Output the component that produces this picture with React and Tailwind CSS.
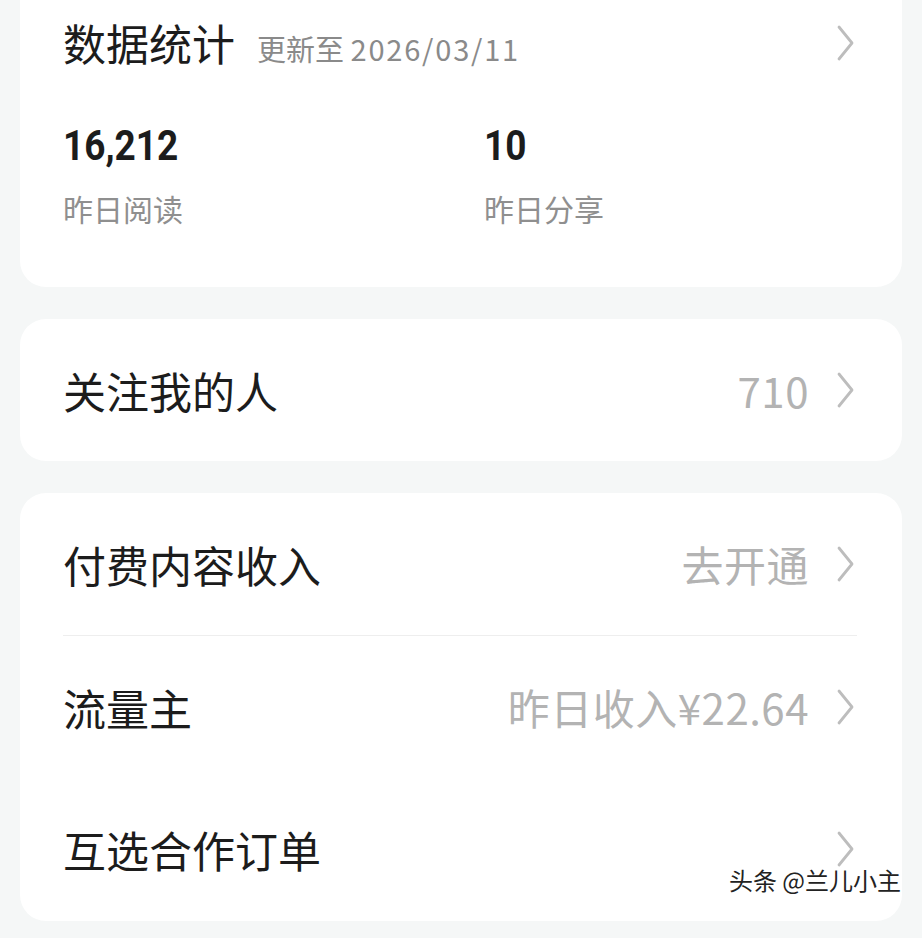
import React from 'react';

const Chevron = () => (
  <svg width="22" height="36" viewBox="0 0 22 36" className="shrink-0">
    <polyline points="4,2 17,18 4,34" fill="none" stroke="#bdbdbd" strokeWidth="2.8" strokeLinecap="round" strokeLinejoin="round" />
  </svg>
);

const Row = ({ label, value }) => (
  <div className="h-[142px] flex items-center justify-between">
    <span className="text-[43px] text-[#1c1c1c] leading-none">{label}</span>
    <div className="flex items-center gap-[26px]">
      {value && <span className="text-[42px] text-[#b3b3b3] leading-none tracking-[0.5px]">{value}</span>}
      <Chevron />
    </div>
  </div>
);

const Stat = ({ num, label, w }) => (
  <div className={w}>
    <div
      className="text-[43px] font-bold text-[#1c1c1c] leading-none inline-block origin-left scale-x-[0.86]"
      style={{ fontFamily: 'Roboto, sans-serif' }}
    >
      {num}
    </div>
    <div className="text-[30px] text-[#8f8f8f] leading-none mt-[26px]">{label}</div>
  </div>
);

const App = () => {
  return (
    <div
      className="w-[922px] h-[938px] bg-[#f5f7f7] px-[20px] flex flex-col gap-[32px] overflow-hidden relative"
      style={{ fontFamily: '"Noto Sans CJK SC", Roboto, sans-serif' }}
    >
      {/* Data card */}
      <div className="bg-white rounded-b-[26px] h-[287px] shrink-0 pl-[43px] pr-[45px]">
        <div className="flex items-center justify-between pt-[21px]">
          <div className="flex items-baseline gap-[22px]">
            <span className="text-[43px] text-[#1c1c1c] leading-none">数据统计</span>
            <span className="text-[29px] text-[#8a8a8a] leading-none">
              更新至 <span className="tracking-[1.8px]">2026/03/11</span>
            </span>
          </div>
          <Chevron />
        </div>
        <div className="flex mt-[60px]">
          <Stat num="16,212" label="昨日阅读" w="w-[421px]" />
          <Stat num="10" label="昨日分享" />
        </div>
      </div>

      {/* Followers */}
      <div className="bg-white rounded-[26px] shrink-0 pl-[43px] pr-[45px]">
        <Row label="关注我的人" value="710" />
      </div>

      {/* Income */}
      <div className="bg-white rounded-[26px] shrink-0 pl-[43px] pr-[45px] h-[428px]">
        <Row label="付费内容收入" value="去开通" />
        <div className="h-px bg-[#eeeeee]" />
        <Row label="流量主" value="昨日收入¥22.64" />
        <Row label="互选合作订单" />
      </div>

      <div
        className="absolute right-[21px] bottom-[46px] text-[24px] text-[#222222] leading-none"
        style={{ textShadow: '0 0 2px #fff, 0 0 2px #fff' }}
      >
        头条 @兰儿小主
      </div>
    </div>
  );
};

export default App;
